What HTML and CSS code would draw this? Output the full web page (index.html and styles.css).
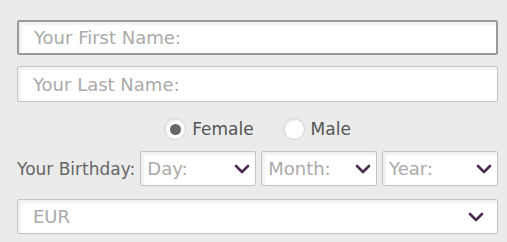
FILE: index.html
```html
<!DOCTYPE html>
<html lang="en">
<head>
  <meta charset="UTF-8" />
  <meta name="viewport" content="width=device-width, initial-scale=1.0"/>
  <title>Sign Up</title>
  <link rel="stylesheet" href="styles.css">
</head>
<body>
  <form class="signup">
    <input type="text" class="field active" placeholder="Your First Name:">
    <input type="text" class="field" placeholder="Your Last Name:">

    <div class="gender">
      <label class="radio"><input type="radio" name="gender" checked> Female</label>
      <label class="radio"><input type="radio" name="gender"> Male</label>
    </div>

    <div class="birthday">
      <span class="label">Your Birthday:</span>
      <div class="select">
        <select><option>Day:</option></select>
        <svg viewBox="0 0 16 10"><path d="M2 2 L8 8 L14 2" /></svg>
      </div>
      <div class="select">
        <select><option>Month:</option></select>
        <svg viewBox="0 0 16 10"><path d="M2 2 L8 8 L14 2" /></svg>
      </div>
      <div class="select">
        <select><option>Year:</option></select>
        <svg viewBox="0 0 16 10"><path d="M2 2 L8 8 L14 2" /></svg>
      </div>
    </div>

    <div class="select wide">
      <select><option>EUR</option></select>
      <svg viewBox="0 0 16 10"><path d="M2 2 L8 8 L14 2" /></svg>
    </div>
  </form>
</body>
</html>
```

FILE: styles.css
```css
* { box-sizing: border-box; margin: 0; padding: 0; }

body {
  font-family: "DejaVu Sans", sans-serif;
  background: #ebebeb;
  color: #666;
}

.signup {
  width: 481px;
  margin: 20px 0 0 17px;
  display: flex;
  flex-direction: column;
}

.field {
  height: 36px;
  border: 1px solid #c4c4c4;
  border-radius: 2px;
  background: #fff;
  box-shadow: inset 3px 3px 2px rgba(0, 0, 0, 0.06);
  font-family: inherit;
  font-size: 18px;
  padding: 0 15px;
  margin-bottom: 10px;
  outline: none;
}

.field.active {
  height: 35px;
  border: 2px solid #9a9a9a;
  margin-bottom: 11px;
}

.field::placeholder,
select {
  color: #aaa;
}

.gender {
  display: flex;
  justify-content: center;
  gap: 29px;
  margin: 6px 0 11px;
  height: 22px;
  align-items: center;
}

.radio {
  display: flex;
  align-items: center;
  gap: 6px;
  font-size: 17px;
  color: #555;
}

.radio input {
  appearance: none;
  width: 22px;
  height: 22px;
  border-radius: 50%;
  border: 1px solid #d4d4d4;
  background: #fff;
  box-shadow: inset 1px 1px 2px rgba(0, 0, 0, 0.1);
  display: grid;
  place-items: center;
}

.radio input:checked::after {
  content: "";
  width: 11px;
  height: 11px;
  border-radius: 50%;
  background: #666;
}

.birthday {
  display: flex;
  align-items: center;
  gap: 5px;
  margin-bottom: 13px;
}

.label {
  font-size: 17px;
  color: #666;
}

.select {
  position: relative;
  flex: 1;
  height: 35px;
}

.select.wide {
  flex: none;
  height: 35px;
}

select {
  appearance: none;
  width: 100%;
  height: 100%;
  border: 1px solid #c4c4c4;
  border-radius: 2px;
  background: #fff;
  box-shadow: inset 3px 3px 2px rgba(0, 0, 0, 0.06);
  font-family: inherit;
  font-size: 18px;
  padding: 0 6px;
  outline: none;
}

.wide select {
  padding: 0 15px;
}

.select svg {
  position: absolute;
  right: 6px;
  top: 13px;
  width: 16px;
  height: 10px;
  fill: none;
  stroke: #4b2d4f;
  stroke-width: 2.6;
  stroke-linecap: round;
  stroke-linejoin: round;
  pointer-events: none;
}

.wide svg {
  right: 14px;
}
```
